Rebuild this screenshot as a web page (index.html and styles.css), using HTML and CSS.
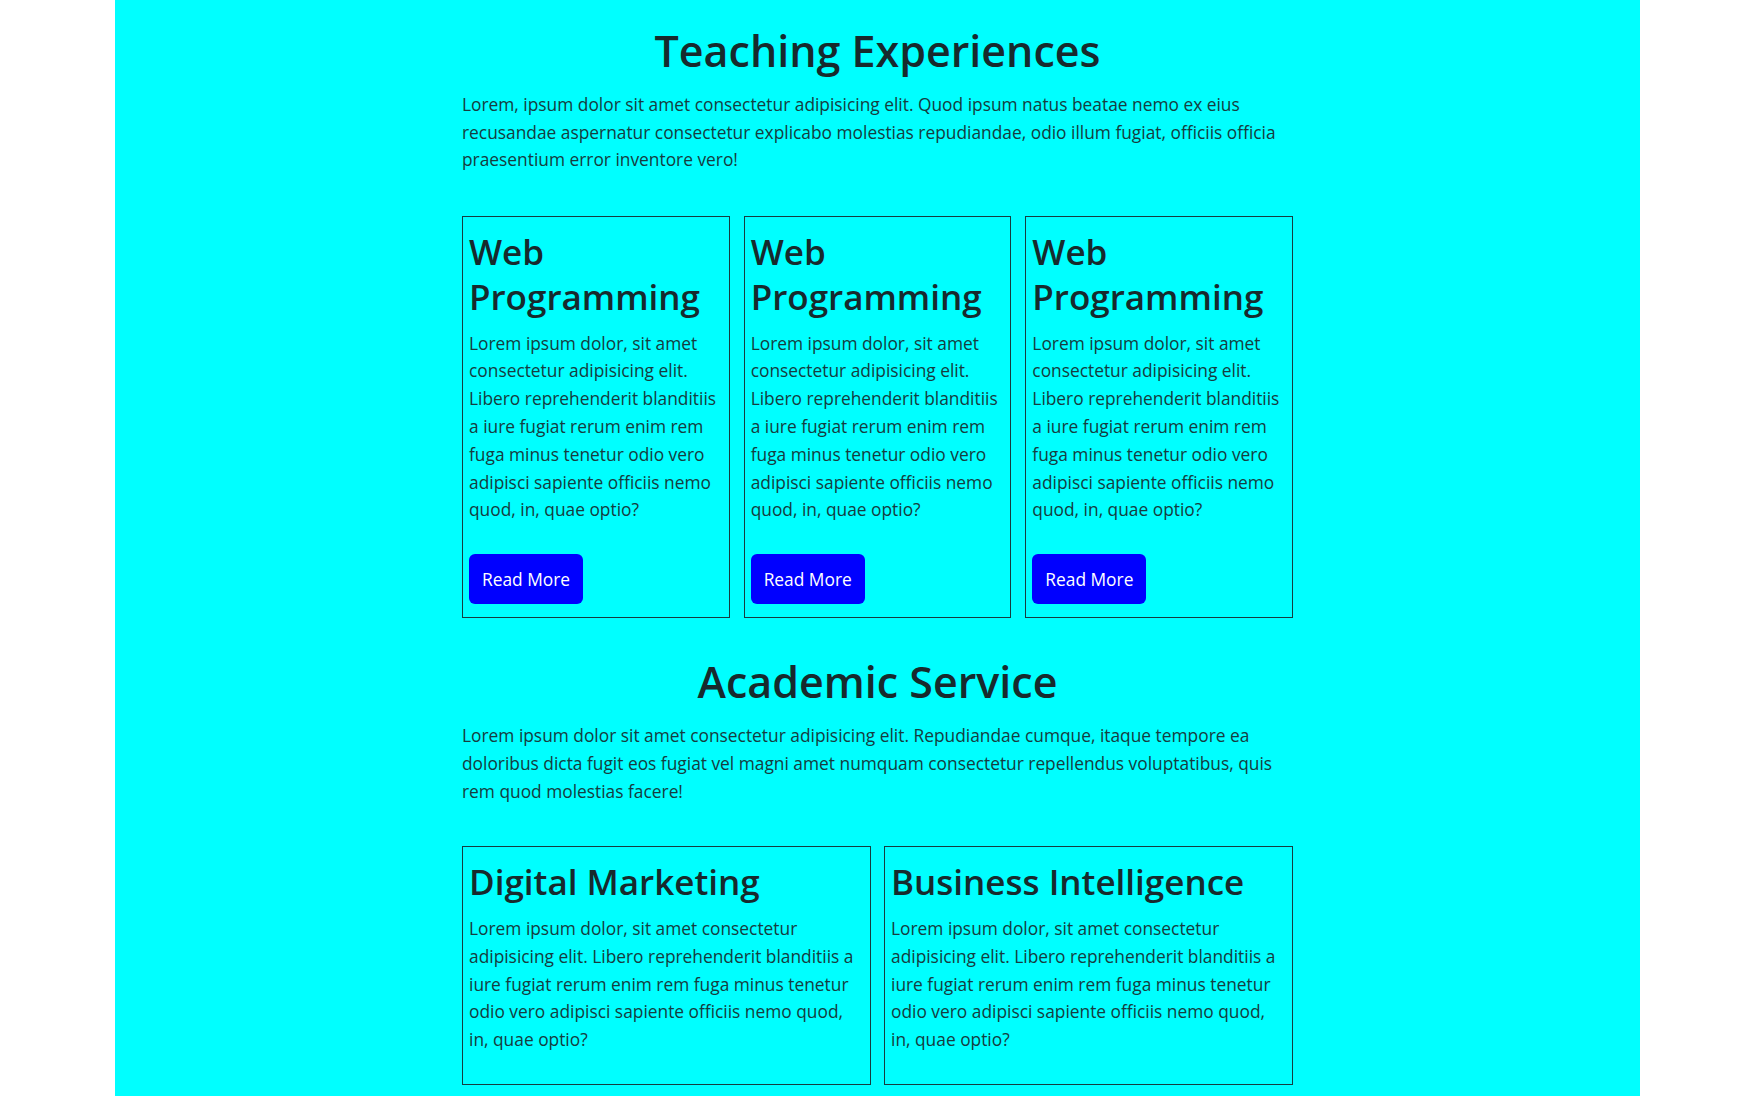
FILE: index.html
```html
<!DOCTYPE html>
<html lang="en">
<head>
<meta charset="utf-8">
<title>Teaching Experiences</title>
<link rel="stylesheet" href="styles.css">
</head>
<body>
<div class="page">
  <main class="content">
    <section class="section">
      <h1 class="section-title">Teaching Experiences</h1>
      <p class="section-lead">Lorem, ipsum dolor sit amet consectetur adipisicing elit. Quod ipsum natus beatae nemo ex eius recusandae aspernatur consectetur explicabo molestias repudiandae, odio illum fugiat, officiis officia praesentium error inventore vero!</p>
      <div class="cards cards-3">
        <div class="card">
          <h2 class="card-title">Web Programming</h2>
          <p class="card-text">Lorem ipsum dolor, sit amet consectetur adipisicing elit. Libero reprehenderit blanditiis a iure fugiat rerum enim rem fuga minus tenetur odio vero adipisci sapiente officiis nemo quod, in, quae optio?</p>
          <div class="card-actions"><a class="btn" href="#">Read More</a></div>
        </div>
        <div class="card">
          <h2 class="card-title">Web Programming</h2>
          <p class="card-text">Lorem ipsum dolor, sit amet consectetur adipisicing elit. Libero reprehenderit blanditiis a iure fugiat rerum enim rem fuga minus tenetur odio vero adipisci sapiente officiis nemo quod, in, quae optio?</p>
          <div class="card-actions"><a class="btn" href="#">Read More</a></div>
        </div>
        <div class="card">
          <h2 class="card-title">Web Programming</h2>
          <p class="card-text">Lorem ipsum dolor, sit amet consectetur adipisicing elit. Libero reprehenderit blanditiis a iure fugiat rerum enim rem fuga minus tenetur odio vero adipisci sapiente officiis nemo quod, in, quae optio?</p>
          <div class="card-actions"><a class="btn" href="#">Read More</a></div>
        </div>
      </div>
    </section>
    <section class="section">
      <h1 class="section-title">Academic Service</h1>
      <p class="section-lead">Lorem ipsum dolor sit amet consectetur adipisicing elit. Repudiandae cumque, itaque tempore ea doloribus dicta fugit eos fugiat vel magni amet numquam consectetur repellendus voluptatibus, quis rem quod molestias facere!</p>
      <div class="cards cards-2">
        <div class="card">
          <h2 class="card-title">Digital Marketing</h2>
          <p class="card-text">Lorem ipsum dolor, sit amet consectetur adipisicing elit. Libero reprehenderit blanditiis a iure fugiat rerum enim rem fuga minus tenetur odio vero adipisci sapiente officiis nemo quod, in, quae optio?</p>
        </div>
        <div class="card">
          <h2 class="card-title">Business Intelligence</h2>
          <p class="card-text">Lorem ipsum dolor, sit amet consectetur adipisicing elit. Libero reprehenderit blanditiis a iure fugiat rerum enim rem fuga minus tenetur odio vero adipisci sapiente officiis nemo quod, in, quae optio?</p>
        </div>
      </div>
    </section>
  </main>
</div>
</body>
</html>
```
FILE: styles.css
```css
* { box-sizing: border-box; }

html, body {
  margin: 0;
  padding: 0;
  background: #ffffff;
}

body {
  font-family: "Open Sans", "Noto Sans", "Liberation Sans", sans-serif;
  color: #163c40;
  font-size: 17.35px;
  line-height: 27.8px;
}

.page {
  margin: 0 115px;
  padding: 25px 0 40px;
  min-height: 100vh;
  background: #00ffff;
}

.content {
  width: 831px;
  margin: 0 auto;
}

.section-title {
  margin: 0 0 13px;
  font-size: 43px;
  line-height: 52.8px;
  font-weight: 600;
  text-align: center;
  color: #172a2d;
}

.section + .section .section-title {
  margin-top: 38px;
}

.section-lead {
  margin: 0 0 42px;
}

.section + .section .section-lead {
  margin-bottom: 41px;
}

.cards {
  display: grid;
  gap: 14px;
  align-items: stretch;
}

.cards-3 { grid-template-columns: repeat(3, 1fr); }
.cards-2 { grid-template-columns: repeat(2, 1fr); gap: 13px; }

.card {
  border: 1px solid #173d40;
  padding: 12px 6px 13px;
}

.card-title {
  margin: 0 0 10.5px;
  font-size: 35px;
  line-height: 45px;
  font-weight: 600;
  color: #172a2d;
}

.card-text {
  margin: 0 0 19px;
}

.cards-2 .card-text {
  margin-bottom: 17px;
}

.card-actions {
  padding-top: 11px;
}

.btn {
  display: inline-block;
  padding: 13px 13px;
  line-height: 24px;
  background: #0000ff;
  color: #ffffff;
  text-decoration: none;
  border-radius: 6px;
}
```
